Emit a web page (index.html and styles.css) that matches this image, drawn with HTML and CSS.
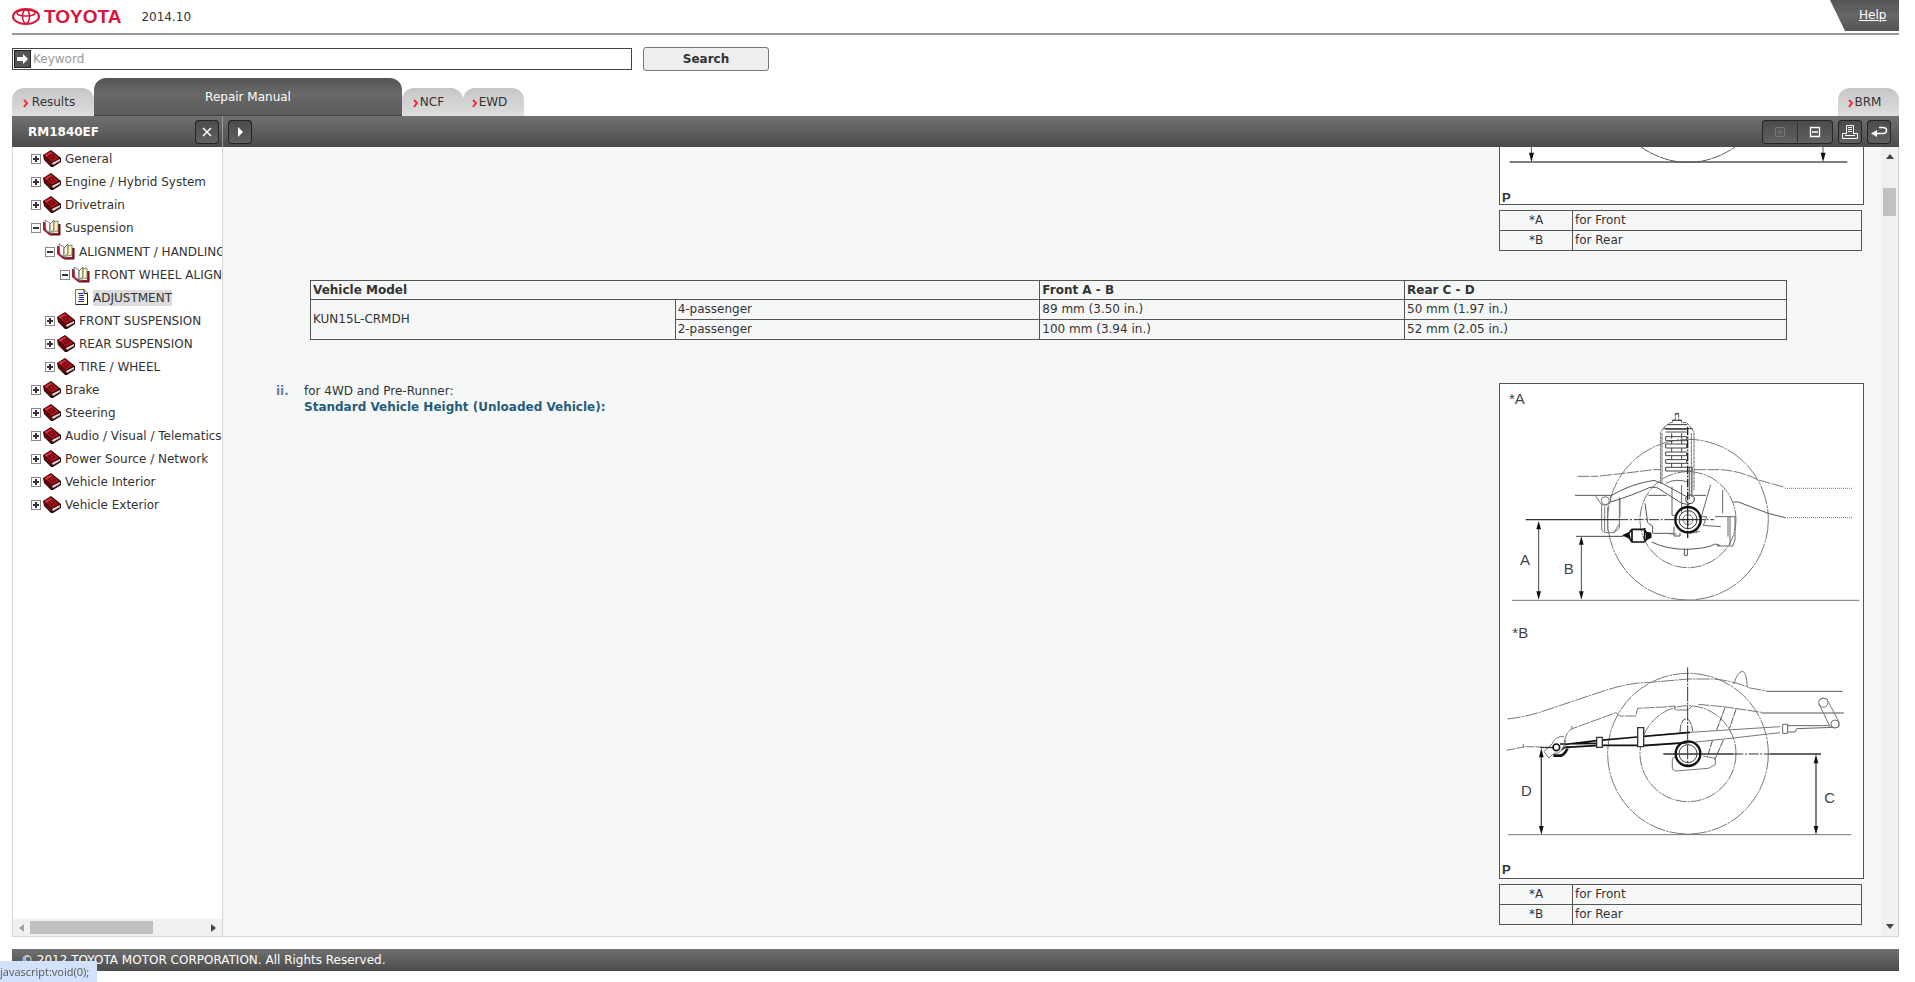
FILE: index.html
```html
<!DOCTYPE html>
<html lang="en">
<head>
  <meta charset="UTF-8">
  <meta name="viewport" content="width=device-width, initial-scale=1.0">
  <title>Repair Manual</title>
  <link rel="stylesheet" href="styles.css">
</head>
<body>
  <!-- Shared icons -->
  <svg class="defs" width="0" height="0" aria-hidden="true">
    <symbol id="book" viewBox="0 0 18 17">
      <path d="M0 5 8 0 18 8V12L10 17H8L1 10Z" fill="#2a0507"/>
      <path d="M1 5 8 1 16 8 9 12Z" fill="#a80f18"/>
      <path d="M2 5 8 2 9 3 3 7Z" fill="#d8343c"/>
      <path d="M5 6 8 4 12 7 9 9Z" fill="#4a060a"/>
      <path d="M7 6 8 5 10 7 9 8Z" fill="#d3202a"/>
      <path d="M1 6 9 13V16L2 10Z" fill="#6d0810"/>
      <path d="M9 13 17 9V11L10 15Z" fill="#eee"/>
      <path d="M10 14.500 17 10.500" stroke="#888" stroke-width=".6"/>
    </symbol>
    <symbol id="openbook" viewBox="0 0 18 17">
      <path d="M0 3V11L6 16H17V5H15V14H7L3 11V3Z" fill="#a3202c"/>
      <path d="M17 5V16H7" fill="none" stroke="#4a0a10"/>
      <path d="M2 1 7 4V14L3 11Z" fill="#fff" stroke="#666" stroke-width=".8"/>
      <path d="M7 5 11 1V11L7 14Z" fill="#fffbe0" stroke="#444" stroke-width=".8"/>
      <path d="M7 14 11 11V3L15 2V12Q10 12 8 15Z" fill="#fff7b5" stroke="#666" stroke-width=".8"/>
    </symbol>
    <symbol id="page" viewBox="0 0 14 17">
      <path d="M.5 .5H9L12.500 4V15.500H.500Z" fill="#fffde4" stroke="#77775a"/>
      <path d="M9 .5V4.500H12.500V15.500H1" fill="none" stroke="#222"/>
      <path d="M3 4.500H8M4 6.500H9M4 8.500H9M4 10.500H9M3 12.500H9" stroke="#2222d8"/>
    </symbol>
    <symbol id="chevron" viewBox="0 0 6 9">
      <path d="M1 1 4 4 1 8" fill="none" stroke="#ee2b36" stroke-width="2"/>
    </symbol>
  </svg>

  <div class="page">
    <header>
      <div class="logo">
        <svg width="28" height="17" viewBox="0 0 28 17" fill="none" stroke="#d8143a" stroke-width="2">
          <ellipse cx="14" cy="8.500" rx="13" ry="7.500"/>
          <ellipse cx="14" cy="5" rx="9" ry="3" stroke-width="1.500"/>
          <ellipse cx="14" cy="8.500" rx="3.500" ry="7" stroke-width="1.500"/>
        </svg>
        <span>TOYOTA</span>
      </div>
      <div class="version">2014.10</div>
      <a href="#" class="help">Help</a>
    </header>

    <form class="search">
      <label class="keyword">
        <svg width="17" height="18" viewBox="0 0 17 18">
          <rect x=".5" y=".5" width="16" height="17" fill="#555" stroke="#222"/>
          <path d="M3 7H9V4L14 9L9 14V11H3Z" fill="#fff"/>
        </svg>
        <input type="text" placeholder="Keyword" aria-label="Keyword">
      </label>
      <button type="button" class="search-button">Search</button>
    </form>

    <nav class="tabs">
      <a href="#" class="tab results"><svg width="6" height="9"><use href="#chevron"/></svg>Results</a>
      <a href="#" class="tab active">Repair Manual</a>
      <a href="#" class="tab"><svg width="6" height="9"><use href="#chevron"/></svg>NCF</a>
      <a href="#" class="tab"><svg width="6" height="9"><use href="#chevron"/></svg>EWD</a>
      <a href="#" class="tab brm"><svg width="6" height="9"><use href="#chevron"/></svg>BRM</a>
    </nav>

    <div class="toolbar">
      <div class="toolbar-left">
        <h1>RM1840EF</h1>
        <button type="button" class="tool" aria-label="Close">
          <svg width="24" height="24" viewBox="0 0 24 24"><path d="M8 8 16 16M16 8 8 16" stroke="#fff" stroke-width="1.500"/></svg>
        </button>
      </div>
      <div class="toolbar-right">
        <button type="button" class="tool" aria-label="Show">
          <svg width="24" height="24" viewBox="0 0 24 24"><path d="M10 7 15 12 10 17Z" fill="#fff"/></svg>
        </button>
        <div class="tool-pair">
          <button type="button" aria-label="Expand all" disabled>
            <svg width="35" height="24" viewBox="0 0 35 24"><path d="M13.500 7.500H22.500V16.500H13.500ZM15 12H21M18 9V15" fill="none" stroke="#777"/></svg>
          </button>
          <button type="button" aria-label="Collapse all">
            <svg width="35" height="24" viewBox="0 0 35 24"><path d="M12.500 7.500H21.500V16.500H12.500ZM14 12H20" fill="none" stroke="#fff" stroke-width="1.300"/></svg>
          </button>
        </div>
        <button type="button" class="tool" aria-label="Print">
          <svg width="24" height="24" viewBox="0 0 24 24" fill="none" stroke="#fff"><path d="M8.500 14V5.500H15.500V14M10 7.500H14M10 9.500H14M10 11.500H14M8 13.500H4.500V18.500H19.500V13.500H16M7 15.500H17"/></svg>
        </button>
        <button type="button" class="tool" aria-label="Back">
          <svg width="24" height="24" viewBox="0 0 24 24"><path d="M12 7.500H16Q19.500 7.500 19.500 10.500Q19.500 13.500 16 13.500H9" fill="none" stroke="#fff" stroke-width="1.500"/><path d="M4 13.500 10 10V17Z" fill="#fff"/></svg>
        </button>
      </div>
    </div>

    <div class="workspace">
      <aside>
        <ul class="tree">
          <li><div class="node"><button class="toggle" aria-label="Expand"></button><svg width="18" height="17"><use href="#book"/></svg><a href="#">General</a></div></li>
          <li><div class="node"><button class="toggle" aria-label="Expand"></button><svg width="18" height="17"><use href="#book"/></svg><a href="#">Engine / Hybrid System</a></div></li>
          <li><div class="node"><button class="toggle" aria-label="Expand"></button><svg width="18" height="17"><use href="#book"/></svg><a href="#">Drivetrain</a></div></li>
          <li>
            <div class="node"><button class="toggle open" aria-label="Collapse"></button><svg width="18" height="17"><use href="#openbook"/></svg><a href="#">Suspension</a></div>
            <ul class="first-level">
              <li>
                <div class="node"><button class="toggle open" aria-label="Collapse"></button><svg width="18" height="17"><use href="#openbook"/></svg><a href="#">ALIGNMENT / HANDLING DIAGNOSIS</a></div>
                <ul>
                  <li>
                    <div class="node"><button class="toggle open" aria-label="Collapse"></button><svg width="18" height="17"><use href="#openbook"/></svg><a href="#">FRONT WHEEL ALIGNMENT</a></div>
                    <ul>
                      <li><div class="node"><svg width="14" height="17"><use href="#page"/></svg><a href="#" class="selected">ADJUSTMENT</a></div></li>
                    </ul>
                  </li>
                </ul>
              </li>
              <li><div class="node"><button class="toggle" aria-label="Expand"></button><svg width="18" height="17"><use href="#book"/></svg><a href="#">FRONT SUSPENSION</a></div></li>
              <li><div class="node"><button class="toggle" aria-label="Expand"></button><svg width="18" height="17"><use href="#book"/></svg><a href="#">REAR SUSPENSION</a></div></li>
              <li><div class="node"><button class="toggle" aria-label="Expand"></button><svg width="18" height="17"><use href="#book"/></svg><a href="#">TIRE / WHEEL</a></div></li>
            </ul>
          </li>
          <li><div class="node"><button class="toggle" aria-label="Expand"></button><svg width="18" height="17"><use href="#book"/></svg><a href="#">Brake</a></div></li>
          <li><div class="node"><button class="toggle" aria-label="Expand"></button><svg width="18" height="17"><use href="#book"/></svg><a href="#">Steering</a></div></li>
          <li><div class="node"><button class="toggle" aria-label="Expand"></button><svg width="18" height="17"><use href="#book"/></svg><a href="#">Audio / Visual / Telematics</a></div></li>
          <li><div class="node"><button class="toggle" aria-label="Expand"></button><svg width="18" height="17"><use href="#book"/></svg><a href="#">Power Source / Network</a></div></li>
          <li><div class="node"><button class="toggle" aria-label="Expand"></button><svg width="18" height="17"><use href="#book"/></svg><a href="#">Vehicle Interior</a></div></li>
          <li><div class="node"><button class="toggle" aria-label="Expand"></button><svg width="18" height="17"><use href="#book"/></svg><a href="#">Vehicle Exterior</a></div></li>
        </ul>
        <div class="hscroll">
          <svg width="5" height="8" viewBox="0 0 5 8"><path d="M5 0V8L0 4Z" fill="#a3a3a3"/></svg>
          <div class="htrack"><div class="hthumb"></div></div>
          <svg width="5" height="8" viewBox="0 0 5 8"><path d="M0 0V8L5 4Z" fill="#444"/></svg>
        </div>
      </aside>

      <main>
        <div class="document">
          <div class="figure-column">
            <figure class="figure cut">
              <svg viewBox="30 441 1089 172" role="img" aria-label="Vehicle height">
                <g fill="none" stroke="#555" stroke-width="3">
                  <path d="M59 486H1072" stroke-width="4"/>
                  <path d="M453 441Q520 487 594 487Q668 487 735 441" stroke-dasharray="30 2"/>
                  <path d="M124 441V470M999 441V470"/>
                </g>
                <path d="M117 458H132L124 486ZM992 458H1007L999 486Z" fill="#111"/>
                <text x="36" y="606" class="mark">P</text>
              </svg>
            </figure>
            <table class="legend">
              <tr><td>*A</td><td>for Front</td></tr>
              <tr><td>*B</td><td>for Rear</td></tr>
            </table>
          </div>

          <table class="heights">
            <tr><th colspan="2">Vehicle Model</th><th>Front A - B</th><th>Rear C - D</th></tr>
            <tr><td rowspan="2">KUN15L-CRMDH</td><td>4-passenger</td><td>89 mm (3.50 in.)</td><td>50 mm (1.97 in.)</td></tr>
            <tr><td>2-passenger</td><td>100 mm (3.94 in.)</td><td>52 mm (2.05 in.)</td></tr>
          </table>

          <section class="step">
            <div class="marker">ii.</div>
            <div class="step-text">
              <p>for 4WD and Pre-Runner:</p>
              <h2>Standard Vehicle Height (Unloaded Vehicle):</h2>
            </div>
            <div class="figure-column">
              <figure class="figure">
                <svg viewBox="30 42 1089 1482" role="img" aria-label="Front and rear vehicle height">
                  <!-- front suspension -->
                  <g fill="none" stroke="#777" stroke-width="3">
                    <circle cx="594" cy="449" r="241" stroke-dasharray="60 3 8 3"/>
                    <circle cx="594" cy="449" r="144" stroke-dasharray="34 3 6 3"/>
                    <path d="M66 691H1108"/>
                    <path d="M262 319H325M330 318Q420 308 490 299H512M612 299H690Q750 302 805 330L885 352" stroke-dasharray="36 4"/>
                    <path d="M885 355H1088M885 443H1088" stroke-dasharray="3 3"/>
                    <path d="M730 396H745L835 430L885 443M255 376H362M475 376H530M610 376H648" stroke="#555"/>
                    <path d="M317 378 333 402Q350 412 362 396V376M335 404V480L345 488H372L388 474V382"/>
                    <path d="M344 410V484M353 410V482M390 385V440M372 486 390 460"/>
                    <path d="M362 378Q420 342 492 331L520 342L590 380M362 396Q430 375 480 352L500 352L575 400L598 404" stroke="#555"/>
                    <circle cx="346" cy="392" r="12"/>
                    <circle cx="600" cy="388" r="13" stroke="#333"/>
                    <path d="M512 340V188L522 172 540 158H548V150H556V130H566V150H575V158H590L605 175 612 188V360M516 190V340M604 190V380" stroke="#666" stroke-dasharray="10 2"/>
                    <path d="M556 132H567M548 151H576M533 164H592M520 176H608" stroke="#333"/>
                    <path d="M527 178H590M527 186H590M545 190V206M575 190V206M527 200H590V212H527ZM545 212V222M575 212V222M527 222H590V234H527ZM545 234V246M575 234V246M527 246H590V257H527ZM545 257V269M575 257V269M527 269H590V280H527ZM545 280V292M575 280V292M527 292H606V303H527Z" stroke="#444"/>
                    <path d="M528 340Q555 324 595 336M546 350V436M575 345V430M598 290V388M606 290V380M546 436H558M625 440H650M650 440 640 466 692 470M618 490 634 440 662 344M698 360V430M720 440V525M714 440V500M675 440H735V510L728 528H680" stroke="#666"/>
                    <path d="M465 400 473 458M475 460 488 468V490M490 490H550M552 470V498H570V488M485 516Q530 538 590 538Q650 536 676 522L690 526M583 536V556H592V536" stroke="#555"/>
                    <path d="M540 492H560M600 490 630 484" />
                    <path d="M107 449H385" stroke="#333" stroke-width="4"/>
                    <path d="M385 449H672" stroke="#333" stroke-dasharray="30 5 6 5"/>
                    <path d="M593 170V504" stroke="#222" stroke-width="4" stroke-dasharray="26 4 5 4"/>
                    <path d="M258 499H400M146 470V670M274 515V670" stroke="#444"/>
                    <path d="M402 496 418 488 426 478H462L470 488 482 490V502L470 508 462 516H426L418 504ZM426 478V518M464 474V510" stroke="#111" stroke-width="5"/>
                    <path d="M402 496 418 488 422 504ZM468 488 482 490V502L468 508Z" fill="#111" stroke="none"/>
                    <circle cx="594" cy="449" r="38" stroke="#111" stroke-width="7"/>
                    <circle cx="594" cy="449" r="27" stroke="#333"/>
                    <circle cx="594" cy="449" r="15"/>
                    <path d="M568 449H622M593 425V475" stroke="#222"/>
                  </g>
                  <path d="M139 478H153L146 453ZM139 664H153L146 689ZM267 524H281L274 499ZM267 664H281L274 689Z" fill="#111"/>
                  <text x="57" y="102" class="callout">*A</text>
                  <text x="90" y="584" class="callout">A</text>
                  <text x="221" y="613" class="callout">B</text>

                  <!-- rear suspension -->
                  <g transform="translate(0 720)">
                    <g fill="none" stroke="#777" stroke-width="3">
                      <circle cx="594" cy="431" r="241" stroke-dasharray="50 3 8 3"/>
                      <circle cx="594" cy="431" r="144" stroke-dasharray="34 3 6 3"/>
                      <path d="M54 674H1084"/>
                      <path d="M52 327Q110 320 155 305L350 240Q420 218 470 218L595 207H670Q730 212 780 234L830 243" stroke-dasharray="40 3 7 3"/>
                      <path d="M830 244H1058M815 309H1062" stroke="#555"/>
                      <path d="M732 222Q742 184 758 184Q770 186 772 232"/>
                      <path d="M222 400Q228 362 250 355L378 308L390 318H437L443 295L520 291L555 288V300H595L606 288M625 283L700 290L815 307" stroke-dasharray="34 3"/>
                      <path d="M50 421 105 410 195 412M100 402V412M246 348V358" stroke-dasharray="26 3"/>
                      <path d="M705 293 680 360M738 298 718 356M700 390 674 450M668 390 652 440M570 366Q572 326 590 326Q604 330 608 364" stroke="#555" stroke-dasharray="22 3"/>
                      <path d="M547 445V478L558 483 655 475 676 464V445L640 438M547 445 560 440" />
                      <path d="M462 378 600 367 870 350M465 408 600 398 730 384 870 368"/>
                      <path d="M878 343H893V370H878ZM893 347H1020M893 366H915L920 356 1030 352" stroke="#666"/>
                      <circle cx="1000" cy="278" r="14"/>
                      <circle cx="1035" cy="342" r="12"/>
                      <path d="M987 282 1020 350M1014 274 1047 336M1020 350Q1034 358 1047 350V336M988 270Q1000 260 1014 270"/>
                      <path d="M222 404 320 392 442 381 600 367M225 412 330 406 465 406 590 398M210 402 322 400M215 420Q222 408 240 412" stroke="#111" stroke-width="5"/>
                      <path d="M320 382H337V412H320ZM443 353H461V410H443Z" fill="#fff" stroke="#333" stroke-width="4"/>
                      <path d="M190 437H213Q225 432 232 416" stroke="#111" stroke-width="8"/>
                      <path d="M222 380Q198 376 186 402L162 424L176 444 192 430Q206 432 216 420L228 390"/>
                      <path d="M150 413H190" stroke="#222"/>
                      <circle cx="199" cy="412" r="10" fill="#fff" stroke="#111" stroke-width="5"/>
                      <path d="M154 435V655M978 450V655" stroke="#444" stroke-width="4"/>
                      <path d="M520 432H730M840 432H993" stroke="#333" stroke-width="4"/>
                      <path d="M730 432H840" stroke="#333" stroke-dasharray="30 5 6 5"/>
                      <path d="M593 172V470" stroke="#333" stroke-dasharray="44 4 6 4"/>
                      <circle cx="594" cy="431" r="37" stroke="#111" stroke-width="7"/>
                      <circle cx="594" cy="431" r="27" stroke="#444"/>
                    </g>
                    <path d="M147 442H161L154 415ZM147 648H161L154 674ZM971 460H985L978 433ZM971 648H985L978 674Z" fill="#111"/>
                    <text x="67" y="84" class="callout">*B</text>
                    <text x="93" y="557" class="callout">D</text>
                    <text x="1003" y="580" class="callout">C</text>
                    <text x="36" y="793" class="mark">P</text>
                  </g>
                </svg>
              </figure>
              <table class="legend">
                <tr><td>*A</td><td>for Front</td></tr>
                <tr><td>*B</td><td>for Rear</td></tr>
              </table>
            </div>
          </section>
        </div>
        <div class="vscroll">
          <svg width="8" height="5" viewBox="0 0 8 5"><path d="M0 5H8L4 0Z" fill="#444"/></svg>
          <div class="vtrack"><div class="vthumb"></div></div>
          <svg width="8" height="5" viewBox="0 0 8 5"><path d="M0 0H8L4 5Z" fill="#444"/></svg>
        </div>
      </main>
    </div>

    <footer>© 2012 TOYOTA MOTOR CORPORATION. All Rights Reserved.</footer>
  </div>
  <div class="status">javascript:void(0);</div>
</body>
</html>
```
FILE: styles.css
```css
* { margin: 0; padding: 0; box-sizing: border-box; }
body {
  font-family: Verdana, "DejaVu Sans", sans-serif;
  font-size: 12px;
  line-height: 16px;
  color: #333;
  background: #fff;
}
a { color: inherit; text-decoration: none; }
button, input { font: inherit; color: inherit; }
svg { display: block; flex: none; }
ul { list-style: none; }
.defs { position: absolute; }

.page {
  height: 100vh;
  display: flex;
  flex-direction: column;
  padding: 0 16px 11px 12px;
}

/* Header */
header {
  height: 35px;
  flex: none;
  display: flex;
  align-items: center;
  border-bottom: 2px solid #999;
}
.logo { display: flex; align-items: center; gap: 4px; }
.logo span {
  font-family: "Liberation Sans", Arial, sans-serif;
  font-size: 19px;
  font-weight: bold;
  color: #d8143a;
}
.version { margin-left: 20px; }
.help {
  align-self: flex-start;
  width: 69px;
  height: 31px;
  margin-left: auto;
  padding: 7px 0 0 29px;
  color: #fff;
  text-decoration: underline;
  background: linear-gradient(#555, #666 50%, #555);
  clip-path: polygon(0 0, 100% 0, 100% 100%, 15px 100%);
}

/* Search */
.search {
  display: flex;
  align-items: center;
  gap: 11px;
  padding: 12px 0 7px;
}
.keyword {
  width: 620px;
  height: 22px;
  display: flex;
  align-items: center;
  padding-left: 1px;
  border: 1px solid #444;
}
.keyword input {
  flex: 1;
  padding-left: 2px;
  border: 0;
  outline: 0;
  background: none;
}
.keyword input::placeholder { color: #999; }
.search-button {
  width: 126px;
  height: 24px;
  font-weight: bold;
  background: #eee;
  border: 1px solid #777;
  border-radius: 3px;
}

/* Tabs */
.tabs { display: flex; align-items: flex-end; }
.tab {
  width: 61px;
  height: 28px;
  display: flex;
  align-items: center;
  justify-content: center;
  gap: 1px;
  padding-right: 8px;
  background: linear-gradient(#c6c6c6, #dedede);
  border-radius: 12px 12px 0 0;
}
.tab svg { margin-top: 3px; }
.tab.results { width: 82px; gap: 3px; }
.tab.active {
  width: 308px;
  height: 38px;
  padding: 0;
  color: #fff;
  background: linear-gradient(#555, #686868 40%, #5c5c5c);
  border-bottom: 1px solid #444;
}
.tab.brm { margin-left: auto; }

/* Toolbar */
.toolbar {
  height: 31px;
  flex: none;
  display: flex;
  background: linear-gradient(#717171, #4b4b4b);
}
.toolbar-left {
  width: 211px;
  display: flex;
  align-items: center;
  justify-content: space-between;
  padding: 0 3px 0 16px;
  border-right: 1px solid #999;
}
h1 { font-size: 12px; color: #fff; }
.toolbar-right {
  flex: 1;
  display: flex;
  align-items: center;
  gap: 5px;
  padding: 0 8px 0 5px;
}
.tool, .tool-pair {
  height: 24px;
  background: linear-gradient(#4a4a4a, #626262);
  border: 0;
  border-radius: 4px;
  box-shadow: inset 0 0 0 1px #252525;
}
.tool { width: 24px; }
.tool-pair { display: flex; margin-left: auto; }
.tool-pair button { width: 35px; border: 0; background: none; }
.tool-pair button + button { width: 36px; border-left: 1px solid #333; }

/* Workspace */
.workspace {
  flex: 1;
  min-height: 0;
  display: flex;
  border: 1px solid #d5d5d5;
  border-top: 0;
}
aside {
  width: 210px;
  display: flex;
  flex-direction: column;
  border-right: 1px solid #d5d5d5;
}
.tree {
  flex: 1;
  padding-left: 18px;
  overflow: hidden;
}
.tree ul { padding-left: 14px; }
.tree ul ul { padding-left: 15px; }
.tree .first-level { padding-top: 1px; }
.node {
  height: 23px;
  display: flex;
  align-items: center;
  white-space: nowrap;
}
.node a { margin-left: 4px; }
.node .selected { background: #ddd; }
.toggle {
  width: 10px;
  height: 10px;
  flex: none;
  margin-right: 2px;
  border: 1px solid #888;
  background:
    linear-gradient(#333, #333) center / 6px 2px no-repeat,
    linear-gradient(#333, #333) center / 2px 6px no-repeat,
    #fff;
}
.toggle.open { background: linear-gradient(#333, #333) center / 6px 2px no-repeat, #fff; }

/* Scrollbars */
.hscroll {
  height: 17px;
  display: flex;
  align-items: center;
  padding: 0 6px;
  background: #f0f0f0;
}
.htrack { flex: 1; padding: 0 6px; }
.hthumb { width: 70%; height: 13px; background: #c1c1c1; }
.vscroll {
  width: 17px;
  display: flex;
  flex-direction: column;
  align-items: center;
  padding: 7px 2px;
  background: #f0f0f0;
}
.vtrack { flex: 1; width: 100%; padding-top: 29px; }
.vthumb { height: 28px; background: #c1c1c1; }

/* Document */
main { flex: 1; display: flex; min-width: 0; }
.document {
  flex: 1;
  padding: 0 17px 0 53px;
  overflow: hidden;
  background: #f6f8f8;
}
.figure-column { width: 365px; margin-left: auto; }
.figure { border: 1px solid #555; background: #fff; }
.figure.cut { border-top: 0; }
.figure svg { width: 100%; }
.callout { font: 45px "Liberation Sans", Arial, sans-serif; fill: #444; }
.mark { font: bold 39px "Liberation Sans", Arial, sans-serif; fill: #333; }

table { border-collapse: collapse; table-layout: fixed; }
th, td {
  height: 20px;
  padding: 0 2px 1px;
  line-height: 16px;
  text-align: left;
  border: 1px solid #555;
}
th { height: 19px; }
.legend { width: 363px; margin-top: 5px; }
.legend td:first-child { width: 73px; text-align: center; }
.heights { width: calc(100% - 111px); margin: 29px 0 43px 34px; }
.heights th:last-child { width: 382px; }

.step { display: flex; }
.marker { width: 28px; font-weight: bold; color: #5f82a5; }
h2 { font-size: 12px; line-height: 16px; color: #265c7a; }

footer {
  height: 22px;
  flex: none;
  margin-top: 12px;
  padding: 3px 9px;
  color: #fff;
  background: linear-gradient(#717171, #4b4b4b);
}

.status {
  position: fixed;
  left: 0;
  bottom: 0;
  height: 21px;
  padding: 3px 8px 0 0;
  font: 11px/16px "Open Sans", sans-serif;
  color: #555;
  background: #d3e1fb;
}
```
